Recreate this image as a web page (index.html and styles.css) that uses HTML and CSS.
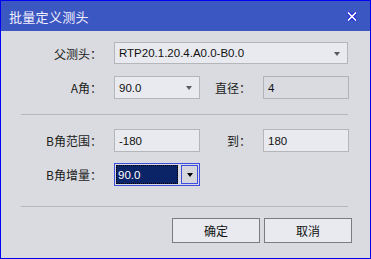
FILE: index.html
```html
<!DOCTYPE html>
<html lang="zh-CN">
<head>
    <meta charset="UTF-8">
    <title>批量定义测头</title>
    <link rel="stylesheet" href="styles.css">
</head>
<body>
    <div class="window">
        <div class="titlebar">
            <span class="title">批量定义测头</span>
            <svg class="close" width="10" height="9" viewBox="0 0 10 9">
                <path d="M1.5 1 L8.5 8 M8.5 1 L1.5 8" stroke="#1c22d8" stroke-width="3.6" stroke-linecap="square"/>
                <path d="M1.5 1 L8.5 8 M8.5 1 L1.5 8" stroke="#ffffff" stroke-width="1.6" stroke-linecap="square"/>
            </svg>
        </div>

        <div class="content">
            <div class="form-grid">
                <label class="lbl">父测头：</label>
                <div class="select wide">RTP20.1.20.4.A0.0-B0.0<i class="arrow"></i></div>

                <label class="lbl">A角：</label>
                <div class="select">90.0<i class="arrow"></i></div>
                <label class="lbl">直径：</label>
                <div class="field readonly">4</div>
            </div>

            <div class="sep"></div>

            <div class="form-grid">
                <label class="lbl">B角范围：</label>
                <div class="field">-180</div>
                <label class="lbl">到：</label>
                <div class="field">180</div>

                <label class="lbl">B角增量：</label>
                <div class="combo">
                    <span class="combo-text">90.0</span>
                    <span class="combo-btn"><i class="arrow dark"></i></span>
                </div>
            </div>

            <div class="sep low"></div>

            <div class="actions">
                <button class="btn">确定</button>
                <button class="btn">取消</button>
            </div>
        </div>
    </div>
</body>
</html>
```

FILE: styles.css
```css
body {
    margin: 0;
    background: #dadbe0;
    font-family: "Noto Sans CJK SC", "Liberation Sans", sans-serif;
    font-size: 12px;
    color: #1b1b1b;
}

.window {
    box-sizing: border-box;
    width: 371px;
    height: 259px;
    border: 1px solid #0000f5;
    background: #dadbe0;
}

.titlebar {
    height: 30px;
    background: #3b57c1;
    display: flex;
    align-items: center;
    justify-content: space-between;
    padding: 0 13px 0 8px;
}

.title {
    color: #f2f0ff;
    font-size: 13px;
    letter-spacing: 0.3px;
}

.close {
    display: block;
    margin-top: 1px;
}

.content {
    padding: 11px 0 0 20px;
}

.form-grid {
    display: grid;
    grid-template-columns: 93px 86px 63px 86px;
    grid-auto-rows: 23px;
    row-gap: 11px;
}

.lbl {
    display: flex;
    align-items: center;
    justify-content: flex-end;
    padding-right: 12px;
}

.select,
.field {
    box-sizing: border-box;
    position: relative;
    display: flex;
    align-items: center;
    padding-left: 4px;
    border: 1px solid #b5b6ba;
    background: #e8eaef;
    font-family: "Liberation Sans", sans-serif;
    font-size: 11.5px;
    color: #111;
}

.field.readonly {
    background: #dadbe0;
    border-color: #b3b4b8;
}

.select.wide {
    grid-column: 2 / 5;
    height: 22px;
    margin-right: 1px;
}

.arrow {
    position: absolute;
    right: 7px;
    top: 9px;
    width: 0;
    height: 0;
    border-left: 3.5px solid transparent;
    border-right: 3.5px solid transparent;
    border-top: 4px solid #5a5a5e;
}

.arrow.dark {
    position: static;
    border-top-color: #000;
}

.combo {
    box-sizing: border-box;
    display: flex;
    gap: 3px;
    padding: 1px;
    border: 1px solid #3c4de0;
    font-family: "Liberation Sans", sans-serif;
    font-size: 11.5px;
}

.combo-text {
    flex: 1;
    display: flex;
    align-items: center;
    padding-left: 2px;
    background: #0b2367;
    color: #ffffff;
    outline: 1px dotted #000;
    outline-offset: -1px;
}

.combo-btn {
    box-sizing: border-box;
    width: 17px;
    display: flex;
    align-items: center;
    justify-content: center;
    border: 1px solid #3c4de0;
    background: #d6d7dc;
}

.sep {
    height: 1px;
    width: 327px;
    margin: 15px 0 14px;
    background: #b6b7bb;
}

.sep.low {
    margin: 20px 0 11px;
}

.actions {
    display: flex;
    justify-content: flex-end;
    gap: 4px;
    padding-right: 18px;
}

.btn {
    box-sizing: border-box;
    width: 88px;
    height: 25px;
    margin: 0;
    border: 1px solid #7c7c80;
    background: #e8eaef;
    font-family: "Noto Sans CJK SC", sans-serif;
    font-size: 12px;
    color: #111;
    padding: 0;
}
```
